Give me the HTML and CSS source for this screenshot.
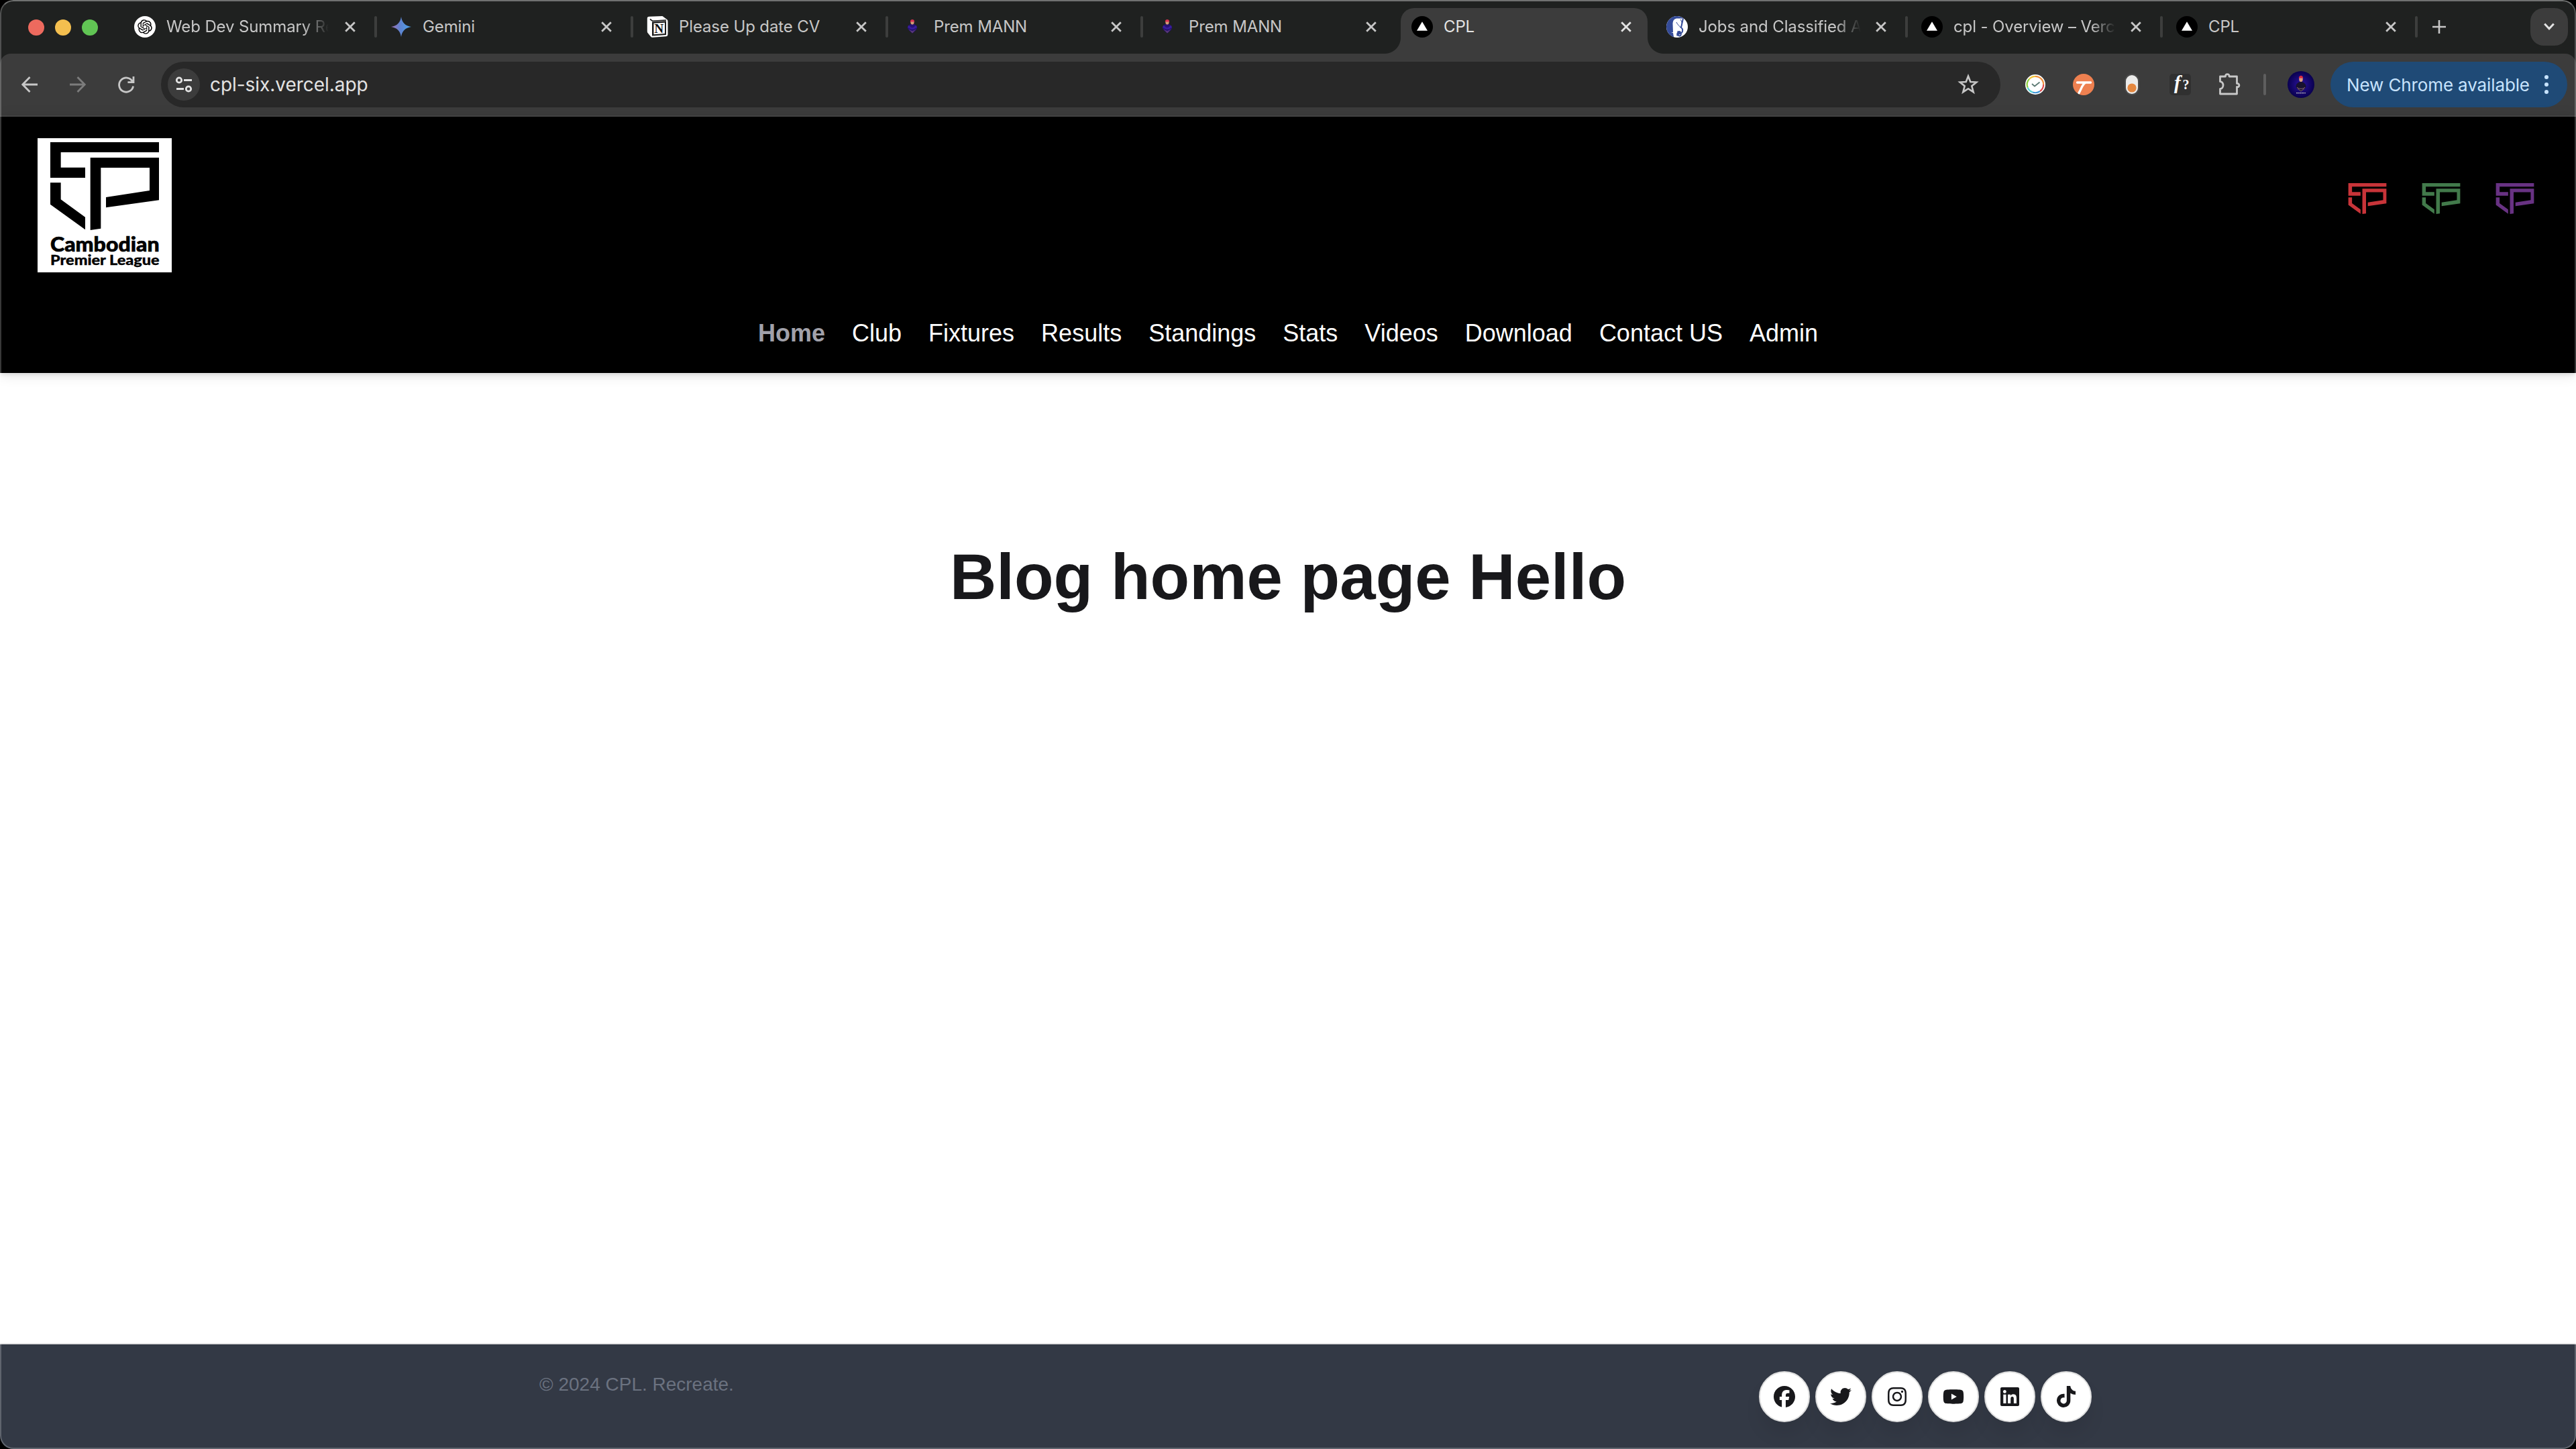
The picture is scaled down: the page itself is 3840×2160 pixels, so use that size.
FILE: index.html
```html
<!DOCTYPE html>
<html lang="en">
<head>
<meta charset="utf-8">
<title>CPL</title>
<link rel="stylesheet" href="styles.css">
</head>
<body>
<svg class="defs" width="0" height="0" aria-hidden="true">
  <symbol id="mark" viewBox="225 125 486 394">
    <path d="M225 125H711V171H272V239H381V285H225ZM225 307H272V382L381 461V517L225 404ZM404 195H711V385L474 418V372L669 342V240H451V512L404 519Z"/>
  </symbol>
  <symbol id="close" viewBox="0 0 16 16"><path d="M1.2 1.2L14.8 14.8M14.8 1.2L1.2 14.8" fill="none" stroke="currentColor" stroke-width="2.8"/></symbol>
  <symbol id="vercel" viewBox="0 0 32 32"><circle cx="16" cy="16" r="16" fill="#000"/><path d="M16 8.2L24 21.8H8Z" fill="#fff"/></symbol>
  <symbol id="person" viewBox="8.500 2 15 27.500" preserveAspectRatio="none">
    <path d="M16 10c3 1 5.500 3 7 7 .6 4-3 8-7 12-4-4-7.600-8-7-12 1.500-4 4-6 7-7z" fill="#251273"/>
    <path d="M10 14c2-1 3 4 6 4s4-5 6-4l1 4c-2 0-3 3-7 3s-5-3-7-3z" fill="#3a1d9c"/>
    <path d="M10.500 21l5.500 8 5.500-8-5.500 4z" fill="#5d3a78"/>
    <ellipse cx="16" cy="8" rx="2.600" ry="4" fill="#d59a78"/>
    <path d="M12.800 6.500c0-6 6.400-6 6.400 0z" fill="#dc3150"/>
  </symbol>
</svg>
<div class="window">
  <div class="tabstrip">
    <div class="lights"><span class="light red"></span><span class="light amber"></span><span class="light green"></span></div>
    <div class="tab wide">
      <svg class="favicon" viewBox="0 0 32 32"><circle cx="16" cy="16" r="16" fill="#fff"/><path transform="translate(5.200 5.200) scale(.9)" d="M22.2819 9.8211a5.9847 5.9847 0 0 0-.5157-4.9108 6.0462 6.0462 0 0 0-6.5098-2.9A6.0651 6.0651 0 0 0 4.9807 4.1818a5.9847 5.9847 0 0 0-3.9977 2.9 6.0462 6.0462 0 0 0 .7427 7.0966 5.98 5.98 0 0 0 .511 4.9107 6.051 6.051 0 0 0 6.5146 2.9001A5.9847 5.9847 0 0 0 13.2599 24a6.0557 6.0557 0 0 0 5.7718-4.2058 5.9894 5.9894 0 0 0 3.9977-2.9001 6.0557 6.0557 0 0 0-.7475-7.0729zm-9.022 12.6081a4.4755 4.4755 0 0 1-2.8764-1.0408l.1419-.0804 4.7783-2.7582a.7948.7948 0 0 0 .3927-.6813v-6.7369l2.02 1.1686a.071.071 0 0 1 .038.052v5.5826a4.504 4.504 0 0 1-4.4945 4.4944zm-9.6607-4.1254a4.4708 4.4708 0 0 1-.5346-3.0137l.142.0852 4.783 2.7582a.7712.7712 0 0 0 .7806 0l5.8428-3.3685v2.3324a.0804.0804 0 0 1-.0332.0615L9.74 19.9502a4.4992 4.4992 0 0 1-6.1408-1.6464zM2.3408 7.8956a4.485 4.485 0 0 1 2.3655-1.9728V11.6a.7664.7664 0 0 0 .3879.6765l5.8144 3.3543-2.0201 1.1685a.0757.0757 0 0 1-.071 0l-4.8303-2.7865A4.504 4.504 0 0 1 2.3408 7.872zm16.5963 3.8558L13.1038 8.364 15.1192 7.2a.0757.0757 0 0 1 .071 0l4.8303 2.7913a4.4944 4.4944 0 0 1-.6765 8.1042v-5.6772a.79.79 0 0 0-.407-.667zm2.0107-3.0231l-.142-.0852-4.7735-2.7818a.7759.7759 0 0 0-.7854 0L9.409 9.2297V6.8974a.0662.0662 0 0 1 .0284-.0615l4.8303-2.7866a4.4992 4.4992 0 0 1 6.6802 4.66zM8.3065 12.863l-2.02-1.1638a.0804.0804 0 0 1-.038-.0567V6.0742a4.4992 4.4992 0 0 1 7.3757-3.4537l-.142.0805L8.704 5.459a.7948.7948 0 0 0-.3927.6813zm1.0976-2.3654l2.602-1.4998 2.6069 1.4998v2.9994l-2.5974 1.4997-2.6067-1.4997Z"/></svg>
      <span class="title faded">Web Dev Summary Re</span><svg class="x"><use href="#close"/></svg>
    </div>
    <div class="tab wide">
      <svg class="favicon" viewBox="0 0 32 32"><defs><linearGradient id="gem" x1="0" y1="0" x2="1" y2="0"><stop offset="0" stop-color="#a06fb4"/><stop offset=".45" stop-color="#5f83d0"/><stop offset="1" stop-color="#4aa3e8"/></linearGradient></defs><path d="M16 1C17.500 10 22 14.500 31 16C22 17.500 17.500 22 16 31C14.500 22 10 17.500 1 16C10 14.500 14.500 10 16 1Z" fill="url(#gem)"/></svg>
      <span class="title">Gemini</span><svg class="x"><use href="#close"/></svg>
    </div>
    <div class="tab">
      <svg class="favicon" viewBox="0 0 32 32"><path d="M3.500.8L23.500 0L30.500 5.200Q31.500 6 31.500 8V27.500Q31.500 30 29 30.200L9 31.800Q7 32 5.800 30.200L1.500 25Q.8 24 .8 22.500V3.500Q.8 1 3.500.8Z" fill="#fff"/><path d="M5 3.200L22.800 2.200L27 5.200L8.500 6.400Z" fill="#fff"/><path d="M3.500 4.500L7.500 8V28L3.500 23.500Z" fill="#fff"/><path d="M5 4.500L8.500 7.200L29 6" fill="none" stroke="#1b1b1b" stroke-width="1.600"/><path d="M8 8.500L29 7.300V28L8 29.500Z" fill="#1b1b1b"/><path d="M10.500 10.800L27 9.800V26L10.500 27.200Z" fill="#fff"/><text x="11.500" y="25.200" class="notion-n">N</text></svg>
      <span class="title">Please Up date CV</span><svg class="x"><use href="#close"/></svg>
    </div>
    <div class="tab"><svg class="favicon person"><use href="#person"/></svg><span class="title">Prem MANN</span><svg class="x"><use href="#close"/></svg></div>
    <div class="tab before-active"><svg class="favicon person"><use href="#person"/></svg><span class="title">Prem MANN</span><svg class="x"><use href="#close"/></svg></div>
    <div class="tab active"><svg class="favicon"><use href="#vercel"/></svg><span class="title">CPL</span><svg class="x"><use href="#close"/></svg></div>
    <div class="tab">
      <svg class="favicon" viewBox="0 0 32 32"><circle cx="16" cy="16" r="16" fill="#fff"/><path d="M26 3.500A16 16 0 1 0 11 31.200L10 25L7 24.500L10 24L9.500 11C10 5 13 3 18 3.500Z" fill="#344b98"/><path d="M25 3.500L22 17C25 19 25 24 21.500 26C23 29 19 31 17.500 28C20 24 15 23 16.500 29.500" fill="none" stroke="#344b98" stroke-width="2"/><path d="M16 22.500Q22 20.500 22 25Q21 28.500 18 27Z" fill="#344b98"/><path d="M21 5C25 11 23 14 21 17C19 14 16 12 15 9" fill="none" stroke="#344b98" stroke-width="1"/></svg>
      <span class="title faded">Jobs and Classified A</span><svg class="x"><use href="#close"/></svg>
    </div>
    <div class="tab"><svg class="favicon"><use href="#vercel"/></svg><span class="title faded">cpl - Overview – Verc</span><svg class="x"><use href="#close"/></svg></div>
    <div class="tab"><svg class="favicon"><use href="#vercel"/></svg><span class="title">CPL</span><svg class="x"><use href="#close"/></svg></div>
    <svg class="plus" viewBox="0 0 20 20"><path d="M10 0V20M0 10H20" stroke="#c7c7c7" stroke-width="2.600"/></svg>
    <div class="tabsearch"><svg width="16" height="12" viewBox="0 0 16 12"><path d="M1.200 1.500L8 8.700L14.800 1.500" fill="none" stroke="#e3e3e3" stroke-width="3"/></svg></div>
  </div>

  <div class="toolbar">
    <span class="tool"><svg width="24" height="24" viewBox="0 0 24 24"><path d="M24 12H2M12.500 1L1.800 12L12.500 23" fill="none" stroke="#c7c7c7" stroke-width="2.800"/></svg></span>
    <span class="tool"><svg width="24" height="24" viewBox="0 0 24 24"><path d="M0 12H22M11.500 1L22.200 12L11.500 23" fill="none" stroke="#7c7c7c" stroke-width="2.800"/></svg></span>
    <span class="tool"><svg width="26" height="26" viewBox="0 0 26 26"><path d="M22.500 8.500A10.600 10.600 0 1 0 23.600 15.500M24 1V9.600H15.400" fill="none" stroke="#c7c7c7" stroke-width="2.800"/></svg></span>
    <div class="omnibox">
      <span class="siteinfo"><svg width="26" height="24" viewBox="0 0 26 24" fill="none" stroke="#e3e3e3" stroke-width="2.800"><circle cx="6" cy="5.500" r="3.700"/><path d="M13 5.500H25M2 18.500H13"/><circle cx="20" cy="18.500" r="3.700"/></svg></span>
      <span class="url">cpl-six.vercel.app</span>
      <svg class="star" width="32" height="32" viewBox="0 0 32 32"><path d="M16 3.500L19.300 12L28.300 12.500L21.300 18.300L23.700 27.200L16 22.200L8.300 27.200L10.700 18.300L3.700 12.500L12.700 12Z" fill="none" stroke="#c7c7c7" stroke-width="2.600"/></svg>
    </div>
    <div class="extensions">
      <span class="tool"><svg width="32" height="32" viewBox="0 0 32 32"><circle cx="16" cy="16" r="15" fill="#fff"/><g fill="none" stroke-width="2.200"><path d="M16 3.800A12.200 12.200 0 0 1 28.200 16" stroke="#f0913f"/><path d="M28.200 16A12.200 12.200 0 0 1 23 26" stroke="#e04b4b"/><path d="M23 26A12.200 12.200 0 0 1 12 27.500" stroke="#3f97d8"/><path d="M12 27.500A12.200 12.200 0 0 1 4.600 20.500" stroke="#59d3d6"/><path d="M4.600 20.500A12.200 12.200 0 0 1 7 7.800" stroke="#8bd03d"/><path d="M7 7.800A12.200 12.200 0 0 1 16 3.800" stroke="#f3c63b"/></g><path d="M11 15L15 18.500L22.500 12.500" fill="none" stroke="#5d7a74" stroke-width="1.800"/></svg></span>
      <span class="tool"><svg width="32" height="32" viewBox="0 0 32 32"><circle cx="16" cy="16" r="16" fill="#ee8050"/><path d="M6.500 13H26.500M18.500 13.500C14 15.500 13 22 9 28.500" fill="none" stroke="#fff" stroke-width="3.400" stroke-linecap="round"/></svg></span>
      <span class="tool"><svg width="32" height="32" viewBox="0 0 32 32"><rect x="5" y="0" width="22" height="32" rx="11" fill="#4a4a4a"/><rect x="7" y="2" width="18" height="28" rx="9" fill="#ebebea"/><circle cx="16" cy="21" r="6.600" fill="#e4873f"/></svg></span>
      <span class="tool"><svg width="32" height="32" viewBox="0 0 32 32"><rect width="32" height="32" rx="5" fill="#303030"/><text x="7" y="22.500" class="fx">f</text><text x="19.500" y="23" class="fq">?</text></svg></span>
      <span class="tool"><svg class="puzzle" width="34" height="34" viewBox="0 0 34 34"><path d="M3.500 5H11.500C10.500 .5 18 .5 17 5H28.500V15.500C33 15 33 21.500 28.500 20.500V31H3.500V23.500C9.500 23 9.500 13 3.500 12.500Z" fill="none" stroke="#c7c7c7" stroke-width="2.800" stroke-linejoin="round"/></svg></span>
    </div>
    <span class="divider"></span>
    <svg class="avatar" viewBox="0 0 40 40"><defs><radialGradient id="av"><stop offset="0" stop-color="#2b13a0"/><stop offset="1" stop-color="#09004f"/></radialGradient></defs><circle cx="20" cy="20" r="20" fill="url(#av)"/><path d="M20 15.500c4 1 7 3 7.500 7 .5 2-3 5-7.500 8-4.500-3-8-6-7.500-8 .5-4 3.500-6 7.500-7z" fill="#17122f"/><path d="M14 24c2 3 10 3 12 0M15 26l5 4 5-4" fill="none" stroke="#8b6874" stroke-width="1"/><ellipse cx="20" cy="12" rx="2.800" ry="4" fill="#d99d80"/><path d="M16.800 10.500c0-5 6.400-5 6.400 0z" fill="#d92a40"/><path d="M13 32.700H27" stroke="#bbb" stroke-width="1.200" stroke-dasharray="2 .6"/></svg>
    <div class="update"><span>New Chrome available</span><svg width="6" height="28" viewBox="0 0 6 28" fill="#c7e3fd"><circle cx="3" cy="3" r="3"/><circle cx="3" cy="14" r="3"/><circle cx="3" cy="25" r="3"/></svg></div>
  </div>

  <header class="site-header">
    <div class="brand-row">
      <svg class="logo" viewBox="168 108 600 600"><rect x="168" y="108" width="600" height="600" fill="#fff"/><use href="#mark" x="225" y="125" width="486" height="394"/><text class="logo-a" x="225" y="616" textLength="488" lengthAdjust="spacingAndGlyphs">Cambodian</text><text class="logo-b" x="225" y="675" textLength="488" lengthAdjust="spacingAndGlyphs">Premier League</text></svg>
      <div class="leagues">
        <svg class="league red"><use href="#mark"/></svg>
        <svg class="league green"><use href="#mark"/></svg>
        <svg class="league purple"><use href="#mark"/></svg>
      </div>
    </div>
    <nav class="nav">
      <a class="current">Home</a><a>Club</a><a>Fixtures</a><a>Results</a><a>Standings</a><a>Stats</a><a>Videos</a><a>Download</a><a>Contact US</a><a>Admin</a>
    </nav>
  </header>

  <main class="main"><h1>Blog home page Hello</h1></main>

  <footer class="site-footer">
    <div class="footer-inner">
      <p>© 2024 CPL. Recreate.</p>
      <div class="socials">
        <a class="social"><svg viewBox="0 0 512 512"><path d="M512 256C512 114.600 397.400 0 256 0S0 114.600 0 256C0 376 82.700 476.800 194.200 504.500V334.200H141.400V256h52.800V222.300c0-87.100 39.400-127.500 125-127.500c16.200 0 44.200 3.200 55.700 6.400V172c-6-.6-16.500-1-29.600-1c-42 0-58.200 15.900-58.200 57.200V256h83.600l-14.400 78.200H287V510.100C413.800 494.800 512 386.900 512 256z"/></svg></a>
        <a class="social"><svg viewBox="0 0 512 512"><path d="M459.370 151.716c.325 4.548.325 9.097.325 13.645 0 138.720-105.583 298.558-298.558 298.558-59.452 0-114.680-17.219-161.137-47.106 8.447.974 16.568 1.299 25.340 1.299 49.055 0 94.213-16.568 130.274-44.832-46.132-.975-84.792-31.188-98.112-72.772 6.498.974 12.995 1.624 19.818 1.624 9.421 0 18.843-1.300 27.614-3.573-48.081-9.747-84.143-51.980-84.143-102.985v-1.299c13.969 7.797 30.214 12.670 47.431 13.319-28.264-18.843-46.781-51.005-46.781-87.391 0-19.492 5.197-37.360 14.294-52.954 51.655 63.675 129.300 105.258 216.365 109.807-1.624-7.797-2.599-15.918-2.599-24.040 0-57.828 46.782-104.934 104.934-104.934 30.213 0 57.502 12.670 76.670 33.137 23.715-4.548 46.456-13.320 66.599-25.340-7.798 24.366-24.366 44.833-46.132 57.827 21.117-2.273 41.584-8.122 60.426-16.243-14.292 20.791-32.161 39.308-52.628 54.253z"/></svg></a>
        <a class="social"><svg viewBox="0 0 448 512"><path d="M224.1 141c-63.6 0-114.9 51.3-114.9 114.9s51.3 114.9 114.9 114.9S339 319.5 339 255.900 287.7 141 224.1 141zm0 189.6c-41.1 0-74.7-33.5-74.7-74.7s33.5-74.7 74.7-74.7 74.7 33.5 74.7 74.7-33.6 74.7-74.7 74.7zm146.4-194.3c0 14.9-12 26.8-26.8 26.8-14.9 0-26.8-12-26.8-26.8s12-26.8 26.8-26.8 26.8 12 26.8 26.8zm76.1 27.2c-1.7-35.9-9.9-67.7-36.2-93.9-26.2-26.2-58-34.4-93.9-36.2-37-2.1-147.9-2.1-184.9 0-35.8 1.7-67.6 9.9-93.9 36.1s-34.4 58-36.2 93.9c-2.1 37-2.1 147.9 0 184.9 1.7 35.9 9.9 67.7 36.2 93.9s58 34.4 93.9 36.2c37 2.1 147.9 2.1 184.9 0 35.9-1.7 67.7-9.9 93.9-36.2 26.2-26.2 34.4-58 36.2-93.9 2.1-37 2.1-147.8 0-184.8zM398.8 388c-7.8 19.6-22.9 34.7-42.6 42.6-29.5 11.7-99.5 9-132.1 9s-102.7 2.6-132.1-9c-19.6-7.8-34.7-22.9-42.6-42.6-11.7-29.5-9-99.5-9-132.1s-2.6-102.7 9-132.1c7.8-19.6 22.9-34.7 42.6-42.6 29.5-11.7 99.5-9 132.1-9s102.7-2.6 132.1 9c19.6 7.8 34.7 22.9 42.6 42.6 11.7 29.5 9 99.5 9 132.1s2.7 102.7-9 132.1z"/></svg></a>
        <a class="social"><svg viewBox="0 0 576 512"><path d="M549.655 124.083c-6.281-23.65-24.787-42.276-48.284-48.597C458.781 64 288 64 288 64S117.22 64 74.629 75.486c-23.497 6.322-42.003 24.947-48.284 48.597-11.412 42.867-11.412 132.305-11.412 132.305s0 89.438 11.412 132.305c6.281 23.65 24.787 41.5 48.284 47.821C117.22 448 288 448 288 448s170.78 0 213.371-11.486c23.497-6.321 42.003-24.171 48.284-47.821 11.412-42.867 11.412-132.305 11.412-132.305s0-89.438-11.412-132.305zm-317.51 213.508V175.185l142.739 81.205-142.739 81.201z"/></svg></a>
        <a class="social"><svg viewBox="0 0 448 512"><path d="M416 32H31.9C14.3 32 0 46.5 0 64.3v383.4C0 465.5 14.3 480 31.9 480H416c17.6 0 32-14.5 32-32.3V64.3c0-17.8-14.4-32.3-32-32.3zM135.4 416H69V202.2h66.5V416zm-33.2-243c-21.3 0-38.5-17.3-38.5-38.5S80.900 96 102.2 96c21.2 0 38.5 17.3 38.5 38.5 0 21.3-17.2 38.5-38.5 38.5zm282.1 243h-66.4V312c0-24.8-.5-56.7-34.5-56.7-34.6 0-39.9 27-39.9 54.9V416h-66.4V202.2h63.7v29.2h.9c8.9-16.8 30.6-34.5 62.9-34.5 67.2 0 79.7 44.3 79.7 101.9V416z"/></svg></a>
        <a class="social"><svg viewBox="0 0 448 512"><path d="M448 209.9a210.1 210.1 0 0 1-122.8-39.3V349.4A162.6 162.6 0 1 1 185 188.3V278.2a74.6 74.6 0 1 0 52.2 71.2V0l88 0a121.2 121.2 0 0 0 1.9 22.2A122.2 122.2 0 0 0 381 102.4a121.4 121.4 0 0 0 67 20.1z"/></svg></a>
      </div>
    </div>
  </footer>
</div>
</body>
</html>
```
FILE: styles.css
```css
* { box-sizing: border-box; }
body { margin: 0; background: #000; font-family: "Liberation Sans", Arial, sans-serif; }
svg { display: block; flex: none; }
.defs { position: absolute; }

.window { position: relative; width: 3840px; height: 2160px; display: flex; flex-direction: column; overflow: hidden; border-radius: 20px; background: #1f2120; }
.window::after { content: ""; position: absolute; inset: 0; border: 2px solid rgba(255,255,255,.22); border-top-color: rgba(255,255,255,.36); border-radius: 20px; pointer-events: none; }

/* tab strip */
.tabstrip { height: 80px; display: flex; align-items: center; font: 500 24px/32px Inter, sans-serif; color: #c7c7c7; }
.lights { width: 178px; padding: 2px 0 0 42px; display: flex; gap: 16px; }
.light { width: 24px; height: 24px; border-radius: 50%; }
.light.red { background: #ed6a5e; }
.light.amber { background: #f4bf4f; }
.light.green { background: #61c554; }
.tab { position: relative; width: 380px; height: 80px; padding-left: 22px; display: flex; align-items: center; }
.tab.wide { width: 382px; }
.tab::after { content: ""; position: absolute; right: -2px; top: 24px; width: 4px; height: 32px; border-radius: 2px; background: #3d3e3d; }
.tab.before-active::after { display: none; }
.favicon { width: 32px; height: 32px; }
.favicon.person { padding: 5px 8.5px 6px; }
.notion-n { font: bold 19px "Liberation Serif", serif; fill: #111; }
.title { width: 242px; margin-left: 16px; white-space: nowrap; overflow: hidden; font-weight: 400; letter-spacing: -.12px; }
.title.faded { -webkit-mask-image: linear-gradient(to right, #000 204px, transparent 242px); mask-image: linear-gradient(to right, #000 204px, transparent 242px); }
.x { width: 16px; height: 16px; margin-left: 22px; }
.wide .x { margin-left: 24px; }
.tab.active { z-index: 1; height: 68px; margin: 12px 6px 0; width: 368px; padding: 0 0 12px 16px; border-radius: 20px 20px 0 0; background: #3c3c3c; color: #e3e3e3; }
.tab.active::before, .tab.active::after { content: ""; position: absolute; top: auto; bottom: 0; width: 24px; height: 24px; border-radius: 0; }
.tab.active::before { left: -24px; background: radial-gradient(circle at 0 0, transparent 23.5px, #3c3c3c 24.5px); }
.tab.active::after { right: -24px; background: radial-gradient(circle at 100% 0, transparent 23.5px, #3c3c3c 24.5px); }
.plus { width: 20px; height: 20px; margin-left: 24px; }
.tabsearch { width: 56px; height: 56px; margin-left: auto; margin-right: 12px; border-radius: 20px; background: #3c3c3c; display: flex; align-items: center; justify-content: center; }

/* toolbar */
.toolbar { height: 94px; padding: 0 13px 0 8px; display: flex; align-items: center; border-bottom: 2px solid #474747; border-radius: 16px 16px 0 0; background: #3c3c3c; font-family: Inter, sans-serif; }
.tool { width: 72px; display: flex; align-items: center; justify-content: center; }
.omnibox { flex: 1; height: 68px; margin: 0 16px; padding: 0 32px 0 10px; display: flex; align-items: center; border-radius: 34px; background: #282828; }
.siteinfo { width: 48px; height: 48px; border-radius: 50%; background: #3c3c3c; display: flex; align-items: center; justify-content: center; }
.url { flex: 1; margin-left: 15px; font-size: 28px; letter-spacing: -.05px; color: #e3e3e3; }
.extensions { display: flex; }
.fx { font: italic bold 29px "Liberation Serif", serif; fill: #fff; }
.fq { font: bold 20px "Liberation Serif", serif; fill: #fff; }
.puzzle { margin-left: 2px; }
.divider { width: 4px; height: 32px; margin-left: 16px; border-radius: 2px; background: #5e5e5e; }
.avatar { width: 40px; height: 40px; margin-left: 32px; }
.update { width: 353px; height: 68px; margin-left: 24px; padding: 0 28px 0 24px; display: flex; align-items: center; justify-content: space-between; border-radius: 34px; background: #1f4a76; color: #c7e3fd; font-size: 26px; letter-spacing: -.12px; white-space: nowrap; }

/* site header */
.site-header { position: relative; height: 382px; background: #000; box-shadow: 0 2px 6px rgba(0,0,0,.1), 0 2px 20px rgba(0,0,0,.12); }
.brand-row { height: 264px; padding: 32px 62px 0 56px; display: flex; justify-content: space-between; align-items: flex-start; }
.logo { width: 200px; height: 200px; }
.logo-a { font: 900 92px Lato, sans-serif; stroke: #000; stroke-width: 2px; }
.logo-b { font: 900 61px Lato, sans-serif; stroke: #000; stroke-width: 1px; }
.leagues { display: flex; gap: 52px; padding-top: 67px; }
.league { width: 58px; height: 46px; }
.league.red { fill: #c83439; }
.league.green { fill: #427a4b; }
.league.purple { fill: #683283; }
.nav { display: flex; justify-content: center; gap: 40px; padding-top: 38px; font-size: 36px; line-height: 42px; color: #fff; white-space: nowrap; }
.nav .current { font-weight: bold; color: #a1a1aa; }

/* content */
.main { flex: 1; background: #fff; display: flex; justify-content: center; }
h1 { margin: 256px 0 0; font-size: 96px; line-height: 96px; color: #18181b; white-space: nowrap; }

/* footer */
.site-footer { height: 158px; border-top: 2px solid #e5e5e5; background: #333945; }
.footer-inner { margin: 0 722px 0 804px; padding-top: 40px; display: flex; justify-content: space-between; }
.footer-inner p { margin: 4px 0 0; font-size: 28px; line-height: 32px; color: #6b7280; }
.socials { display: flex; gap: 8px; }
.social { width: 76px; height: 76px; border: 2px solid #dedede; border-radius: 50%; background: #fff; display: flex; align-items: center; justify-content: center; box-shadow: 0 20px 30px -6px rgba(0,0,0,.1); }
.social svg { width: 32px; height: 32px; fill: #18181b; }
```
